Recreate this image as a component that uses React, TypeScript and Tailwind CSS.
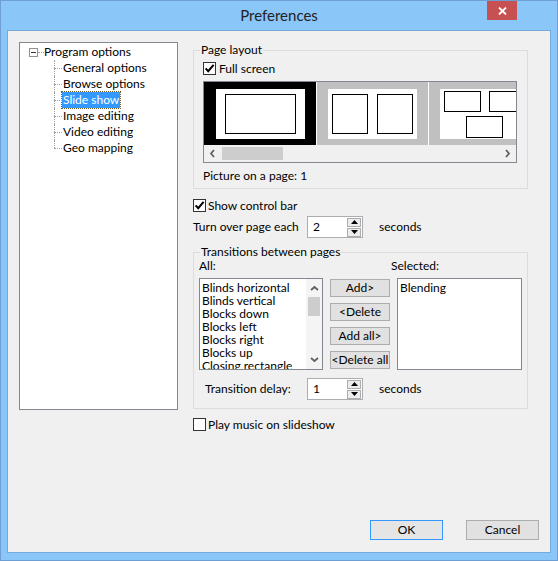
import React from 'react';

const Check = ({ checked }: { checked?: boolean }) => (
  <span className="flex h-[13px] w-[13px] flex-none items-center justify-center border border-[#333333] bg-white">
    {checked && (
      <svg width="11" height="11" viewBox="0 0 11 11">
        <path d="M1.6 5.4 L4.2 8.2 L9.6 1.8" fill="none" stroke="#000" strokeWidth="2" />
      </svg>
    )}
  </span>
);

const Arrow = ({ dir }: { dir: 'up' | 'down' }) => (
  <span className="flex h-[9px] w-[14px] items-center justify-center border border-[#acacac] bg-[#ececec]">
    <svg width="7" height="4" viewBox="0 0 7 4">
      {dir === 'up' ? <path d="M0 4 L3.5 0 L7 4 Z" fill="#000" /> : <path d="M0 0 L3.5 4 L7 0 Z" fill="#000" />}
    </svg>
  </span>
);

const Spin = ({ value }: { value: string }) => (
  <div className="flex h-[22px] w-[56px] items-center border border-[#abadb3] bg-white">
    <span className="flex-1 pl-[5px] leading-none">{value}</span>
    <div className="mr-[1px] flex flex-col gap-[1px]">
      <Arrow dir="up" />
      <Arrow dir="down" />
    </div>
  </div>
);

const Chevron = ({ dir }: { dir: 'left' | 'right' | 'up' | 'down' }) => {
  const d = {
    left: 'M5 1 L2 4.5 L5 8',
    right: 'M2 1 L5 4.5 L2 8',
    up: 'M1 5 L4.5 2 L8 5',
    down: 'M1 2 L4.5 5 L8 2',
  }[dir];
  const horiz = dir === 'left' || dir === 'right';
  return (
    <svg width={horiz ? 7 : 9} height={horiz ? 9 : 7} viewBox={horiz ? '0 0 7 9' : '0 0 9 7'}>
      <path d={d} fill="none" stroke="#606060" strokeWidth="1.8" />
    </svg>
  );
};

const Btn = ({ label }: { label: string }) => (
  <button className="flex h-[18px] w-[60px] items-center justify-center whitespace-nowrap border border-[#adadad] bg-[#e1e1e1] leading-none">
    {label}
  </button>
);

const treeChildren = ['General options', 'Browse options', 'Slide show', 'Image editing', 'Video editing', 'Geo mapping'];

const transitions = [
  'Blinds horizontal',
  'Blinds vertical',
  'Blocks down',
  'Blocks left',
  'Blocks right',
  'Blocks up',
  'Closing rectangle',
];

export default function App() {
  return (
    <div className="flex h-[561px] w-[558px] flex-col whitespace-nowrap border border-[#6d9fd5] bg-[#8bc6f9] font-['Lato',sans-serif] text-[12px] text-black">
      {/* Title bar */}
      <div className="grid h-[29px] grid-cols-[1fr_auto_1fr]">
        <div />
        <div className="flex items-center pb-[1px] text-[15px] text-[#222]">Preferences</div>
        <div className="flex items-start justify-end pr-[40px]">
          <span className="flex h-[19px] w-[30px] items-center justify-center bg-[#c75050]">
            <svg width="9" height="8" viewBox="0 0 9 8">
              <path d="M1 0.5 L8 7.5 M8 0.5 L1 7.5" stroke="#fff" strokeWidth="1.8" />
            </svg>
          </span>
        </div>
      </div>

      {/* Client */}
      <div className="mx-[6px] flex h-[523px] flex-col border border-[#76a9dc] bg-[#f0f0f0]">
        <div className="flex pl-[11px] pt-[11px]">
          {/* Tree */}
          <div className="h-[368px] w-[159px] flex-none border border-[#828790] bg-white pt-[1px]">
            <div className="flex h-[16px] items-center pl-[9px]">
              <span className="flex h-[9px] w-[9px] items-center justify-center border border-[#919191] bg-white">
                <span className="h-px w-[5px] bg-[#333]" />
              </span>
              <span className="w-[6px] border-t border-dotted border-[#a0a0a0]" />
              <span className="leading-[16px]">Program options</span>
            </div>
            {treeChildren.map((c, i) => (
              <div key={c} className="ml-[34px] flex h-[16px] items-center">
                <span className="relative h-full w-[8px] flex-none">
                  <span
                    className={`absolute left-0 top-0 border-l border-dotted border-[#a0a0a0] ${
                      i === treeChildren.length - 1 ? 'h-[8px]' : 'h-full'
                    }`}
                  />
                  <span className="absolute left-0 top-[8px] w-full border-t border-dotted border-[#a0a0a0]" />
                </span>
                <span
                  className={`px-[1px] leading-[16px] ${
                    c === 'Slide show' ? 'bg-[#3399ff] text-white outline-1 outline-dotted outline-[#7a5a20]' : ''
                  }`}
                >
                  {c}
                </span>
              </div>
            ))}
          </div>

          {/* Right column */}
          <div className="ml-[15px] flex w-[335px] flex-col">
            <fieldset className="border border-[#dcdcdc] pb-[4px] pl-[9px]">
              <legend className="ml-[-3px] h-[16px] px-[1px] leading-[16px]">Page layout</legend>
              <div className="mt-[4px] flex h-[13px] items-center gap-[3px]">
                <Check checked />
                <span className="leading-[13px]">Full screen</span>
              </div>
              <div className="mt-[6px] flex h-[82px] w-[314px] flex-col border border-[#828790] bg-white">
                <div className="flex h-[63px] overflow-hidden">
                  <div className="w-[112px] flex-none bg-black pl-[12px] pt-[7px]">
                    <div className="h-[50px] w-[89px] bg-white pl-[9px] pt-[5px]">
                      <div className="h-[40px] w-[71px] border border-black" />
                    </div>
                  </div>
                  <div className="w-px flex-none bg-white" />
                  <div className="w-[111px] flex-none bg-[#c0c0c0] pl-[11px] pt-[7px]">
                    <div className="flex h-[50px] w-[89px] gap-[9px] bg-white pl-[4px] pt-[5px]">
                      <div className="h-[40px] w-[36px] border border-black" />
                      <div className="h-[40px] w-[36px] border border-black" />
                    </div>
                  </div>
                  <div className="w-px flex-none bg-white" />
                  <div className="w-[111px] flex-none bg-[#c0c0c0] pl-[11px] pt-[7px]">
                    <div className="h-[50px] w-[89px] bg-white pt-[2px]">
                      <div className="flex gap-[8px] pl-[4px]">
                        <div className="h-[21px] w-[37px] border border-black" />
                        <div className="h-[21px] w-[37px] border border-black" />
                      </div>
                      <div className="ml-[26px] mt-[4px] h-[22px] w-[37px] border border-black" />
                    </div>
                  </div>
                </div>
                <div className="flex h-[17px] items-center bg-[#f0f0f0]">
                  <span className="flex w-[17px] justify-center">
                    <Chevron dir="left" />
                  </span>
                  <span className="ml-[1px] h-[13px] w-[61px] bg-[#cdcdcd]" />
                  <span className="flex-1" />
                  <span className="flex w-[17px] justify-center">
                    <Chevron dir="right" />
                  </span>
                </div>
              </div>
              <div className="mt-[5px] h-[16px] leading-[16px]">Picture on a page: 1</div>
            </fieldset>

            <div className="mt-[10px] flex h-[13px] items-center gap-[2px]">
              <Check checked />
              <span className="leading-[13px]">Show control bar</span>
            </div>

            <div className="mt-[4px] flex h-[22px] items-center">
              <span className="w-[114px]">Turn over page each</span>
              <Spin value="2" />
              <span className="ml-[16px]">seconds</span>
            </div>

            <fieldset className="mt-[6px] border border-[#dcdcdc] pb-[8px] pl-[5px]">
              <legend className="ml-[1px] h-[16px] px-[1px] leading-[16px]">Transitions between pages</legend>
              <div className="flex">
                <div className="flex w-[124px] flex-col">
                  <div className="h-[18px] leading-[12px]">All:</div>
                  <div className="flex h-[92px] border border-[#828790] bg-white">
                    <div className="flex-1 overflow-hidden pl-[2px] pt-[2px]">
                      {transitions.map((t) => (
                        <div key={t} className="h-[13px] leading-[13px]">
                          {t}
                        </div>
                      ))}
                    </div>
                    <div className="flex w-[16px] flex-col items-center bg-[#f4f4f4]">
                      <span className="mt-[6px] flex h-[7px]">
                        <Chevron dir="up" />
                      </span>
                      <span className="mt-[5px] h-[19px] w-[12px] bg-[#cdcdcd]" />
                      <span className="flex-1" />
                      <span className="mb-[6px] flex h-[7px]">
                        <Chevron dir="down" />
                      </span>
                    </div>
                  </div>
                </div>
                <div className="ml-[7px] flex flex-col gap-[6px] pt-[19px]">
                  <Btn label="Add>" />
                  <Btn label="<Delete" />
                  <Btn label="Add all>" />
                  <Btn label="<Delete all" />
                </div>
                <div className="ml-[7px] flex w-[125px] flex-col">
                  <div className="ml-[-6px] h-[18px] leading-[12px]">Selected:</div>
                  <div className="h-[92px] border border-[#828790] bg-white pl-[2px] pt-[2px]">
                    <div className="h-[13px] leading-[13px]">Blending</div>
                  </div>
                </div>
              </div>
              <div className="ml-[6px] mt-[8px] flex h-[22px] items-center">
                <span className="w-[102px]">Transition delay:</span>
                <Spin value="1" />
                <span className="ml-[16px]">seconds</span>
              </div>
            </fieldset>

            <div className="mt-[9px] flex h-[13px] items-center gap-[2px]">
              <Check />
              <span className="leading-[13px]">Play music on slideshow</span>
            </div>
          </div>
        </div>

        {/* Bottom buttons */}
        <div className="mb-[12px] mt-auto flex justify-end gap-[23px] pr-[11px]">
          <button className="flex h-[20px] w-[73px] items-center justify-center border border-[#3399ff] bg-[#e5e5e5] leading-none">
            OK
          </button>
          <button className="flex h-[20px] w-[73px] items-center justify-center border border-[#adadad] bg-[#e1e1e1] leading-none">
            Cancel
          </button>
        </div>
      </div>
      <div className="flex-1" />
    </div>
  );
}
